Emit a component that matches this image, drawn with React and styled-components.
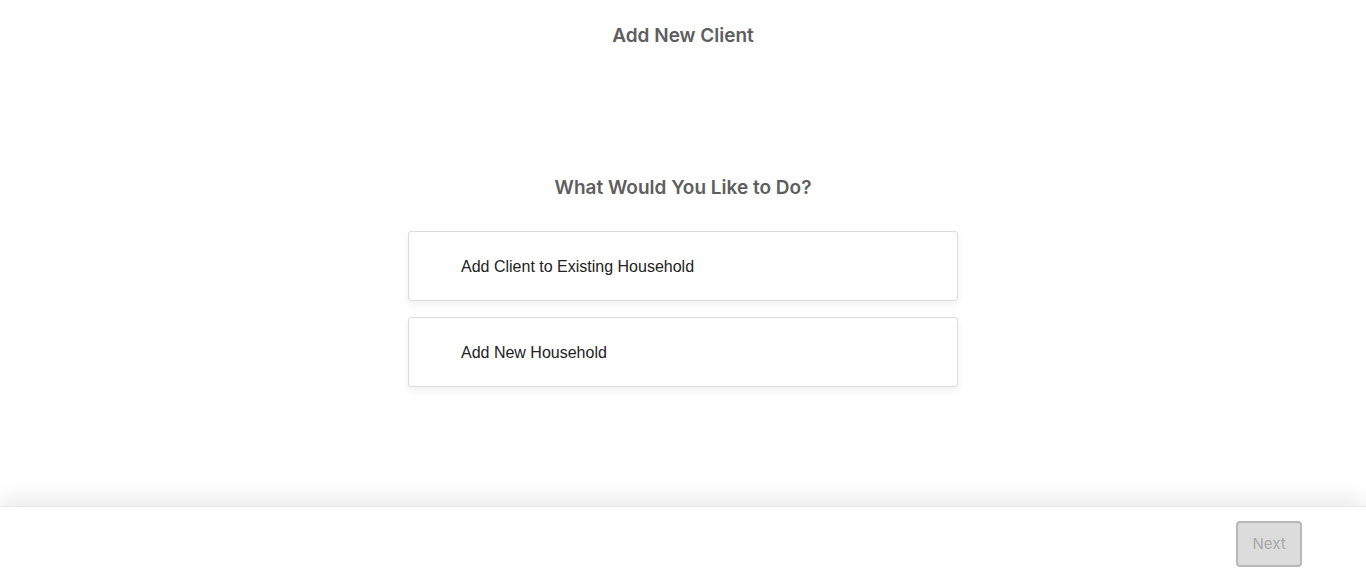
import React from "react";
import styled, { createGlobalStyle } from "styled-components";

const Global = createGlobalStyle`
  html, body { margin: 0; padding: 0; background: #fff; }
  body { font-family: "Liberation Sans", Arial, sans-serif; }
  #root { height: 581px; }
`;

const Page = styled.div`
  height: 581px;
  display: flex;
  flex-direction: column;
  background: #fff;
`;

const Main = styled.main`
  flex: 1;
  display: flex;
  flex-direction: column;
  align-items: center;
`;

const Title = styled.h1`
  margin: 23px 0 0;
  font-family: Inter, "Noto Sans", sans-serif;
  font-weight: 600;
  font-size: 19px;
  line-height: 26px;
  color: #5e5e5e;
`;

const Question = styled.h2`
  margin: 126px 0 0;
  font-family: Inter, "Noto Sans", sans-serif;
  font-weight: 600;
  font-size: 19px;
  line-height: 26px;
  color: #5e5e5e;
`;

const Options = styled.div`
  margin-top: 30px;
  display: flex;
  flex-direction: column;
  gap: 16px;
  width: 550px;
`;

const Option = styled.button`
  box-sizing: border-box;
  height: 70px;
  width: 100%;
  display: flex;
  align-items: center;
  padding: 2px 0 0 52px;
  background: #fff;
  border: 1px solid #dcdcdc;
  border-radius: 3px;
  box-shadow: 0 4px 10px rgba(0, 0, 0, 0.06);
  font-family: "Liberation Sans", Arial, sans-serif;
  font-size: 16px;
  color: #222;
  text-align: left;
  cursor: pointer;
`;

const Footer = styled.footer`
  height: 75px;
  flex: none;
  display: flex;
  align-items: center;
  justify-content: flex-end;
  padding-right: 64px;
  background: #fff;
  box-shadow: 0 -10px 18px rgba(0, 0, 0, 0.07);
  border-top: 1px solid #e6e7e8;
  box-sizing: border-box;
`;

const NextButton = styled.button`
  box-sizing: border-box;
  width: 66px;
  height: 46px;
  margin-bottom: 1px;
  background: #dcdcdc;
  border: 2px solid #b8b8b8;
  border-radius: 4px;
  font-family: Inter, "Noto Sans", sans-serif;
  font-size: 15px;
  color: #a9a9a9;
  cursor: not-allowed;
`;

export default function App() {
  return (
    <>
      <Global />
      <Page>
        <Main>
          <Title>Add New Client</Title>
          <Question>What Would You Like to Do?</Question>
          <Options>
            <Option>Add Client to Existing Household</Option>
            <Option>Add New Household</Option>
          </Options>
        </Main>
        <Footer>
          <NextButton disabled>Next</NextButton>
        </Footer>
      </Page>
    </>
  );
}
